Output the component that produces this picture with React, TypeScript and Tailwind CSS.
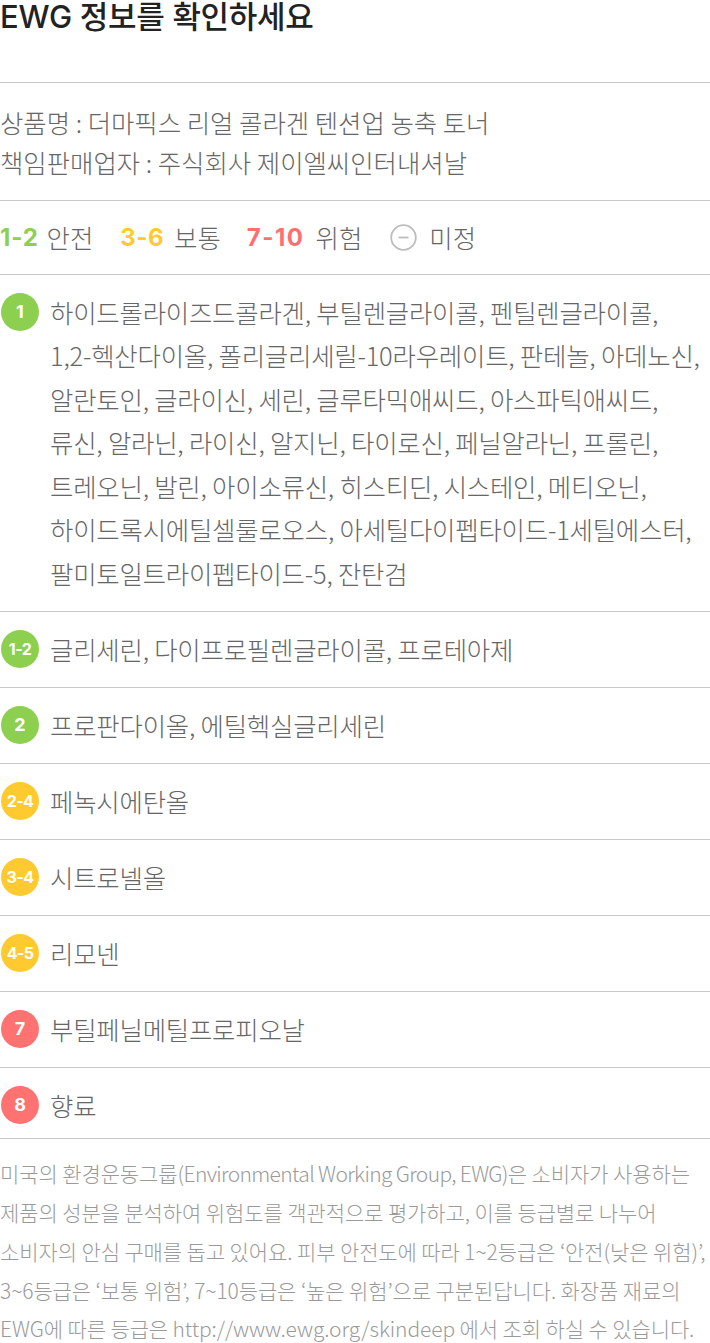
import React from 'react';

const kr = { fontFamily: '"Noto Sans CJK KR", "Noto Sans", sans-serif' };
const latin = { fontFamily: 'Inter, "Noto Sans CJK KR", sans-serif' };

type Row = { grade: string; color: string; lines: string[] };

const rows: Row[] = [
  {
    grade: '1',
    color: 'bg-[#8dcf4f]',
    lines: [
      '하이드롤라이즈드콜라겐, 부틸렌글라이콜, 펜틸렌글라이콜,',
      '1,2-헥산다이올, 폴리글리세릴-10라우레이트, 판테놀, 아데노신,',
      '알란토인, 글라이신, 세린, 글루타믹애씨드, 아스파틱애씨드,',
      '류신, 알라닌, 라이신, 알지닌, 타이로신, 페닐알라닌, 프롤린,',
      '트레오닌, 발린, 아이소류신, 히스티딘, 시스테인, 메티오닌,',
      '하이드록시에틸셀룰로오스, 아세틸다이펩타이드-1세틸에스터,',
      '팔미토일트라이펩타이드-5, 잔탄검',
    ],
  },
  { grade: '1-2', color: 'bg-[#8dcf4f]', lines: ['글리세린, 다이프로필렌글라이콜, 프로테아제'] },
  { grade: '2', color: 'bg-[#8dcf4f]', lines: ['프로판다이올, 에틸헥실글리세린'] },
  { grade: '2-4', color: 'bg-[#ffca30]', lines: ['페녹시에탄올'] },
  { grade: '3-4', color: 'bg-[#ffca30]', lines: ['시트로넬올'] },
  { grade: '4-5', color: 'bg-[#ffca30]', lines: ['리모넨'] },
  { grade: '7', color: 'bg-[#ff7272]', lines: ['부틸페닐메틸프로피오날'] },
  { grade: '8', color: 'bg-[#ff7272]', lines: ['향료'] },
];

function Badge({ grade, color }: { grade: string; color: string }) {
  const small = grade.length > 1;
  return (
    <div
      className={`flex h-[38px] w-[38px] shrink-0 items-center justify-center rounded-full text-white font-bold ${color} ${
        small ? 'text-[16px] tracking-[-0.6px]' : 'text-[18px]'
      }`}
      style={latin}
    >
      {grade}
    </div>
  );
}

function MinusCircle() {
  return (
    <svg width="27" height="27" viewBox="0 0 27 27" fill="none">
      <circle cx="13.5" cy="13.5" r="12.3" stroke="#bdbdbd" strokeWidth="1.8" />
      <line x1="8.5" y1="13.5" x2="18.5" y2="13.5" stroke="#bdbdbd" strokeWidth="1.8" />
    </svg>
  );
}

export default function App() {
  return (
    <div className="w-[710px] bg-white text-[#666]" style={kr}>
      {/* 타이틀 */}
      <div className="h-[83px] border-b border-[#c9c9c9]">
        <h1 className="text-[31px] font-medium leading-[34px] text-[#222] tracking-[-0.3px]" style={latin}>
          EWG 정보를 확인하세요
        </h1>
      </div>

      {/* 상품 정보 */}
      <div className="border-b border-[#c9c9c9] pt-[19px] pb-[18px] text-[25.4px] leading-[40px] font-light">
        <p>상품명 : 더마픽스 리얼 콜라겐 텐션업 농축 토너</p>
        <p>책임판매업자 : 주식회사 제이엘씨인터내셔날</p>
      </div>

      {/* 범례 */}
      <div className="flex items-center border-b border-[#c9c9c9] py-[16px] text-[25.4px] leading-[41px] font-light">
        <span className="text-[24px] font-bold text-[#8dcf4f] tracking-[0.8px]" style={latin}>1-2</span>
        <span className="ml-[8px]">안전</span>
        <span className="ml-[27px] text-[24px] font-bold text-[#ffca30] tracking-[0.5px]" style={latin}>3-6</span>
        <span className="ml-[10px]">보통</span>
        <span className="ml-[26px] text-[24px] font-bold text-[#ff6f6f] tracking-[1.5px]" style={latin}>7-10</span>
        <span className="ml-[11px]">위험</span>
        <span className="ml-[28px] flex items-center">
          <MinusCircle />
        </span>
        <span className="ml-[12px]">미정</span>
      </div>

      {/* 성분 목록 */}
      {rows.map((row, idx) => (
        <div
          key={row.grade}
          className={`flex items-start border-b border-[#c9c9c9] pt-[15.75px] ${
            idx === rows.length - 1 ? 'pb-[11px]' : 'pb-[15.75px]'
          }`}
        >
          <div className="mt-[2px] ml-[1px]">
            <Badge grade={row.grade} color={row.color} />
          </div>
          <div className="ml-[11px] whitespace-nowrap text-[25.4px] leading-[43.5px] font-light tracking-[-0.2px]">
            {row.lines.map((l, i) => (
              <div key={i}>{l}</div>
            ))}
          </div>
        </div>
      ))}

      {/* 안내문 */}
      <p className="whitespace-nowrap pt-[15px] pb-[6px] text-[21px] leading-[38.8px] font-light text-[#9a9a9a] tracking-[-0.1px]">
        미국의 환경운동그룹<span className="tracking-[-0.65px]">(Environmental Working Group, EWG)</span>은 소비자가 사용하는
        <br />
        제품의 성분을 분석하여 위험도를 객관적으로 평가하고, 이를 등급별로 나누어
        <br />
        소비자의 안심 구매를 돕고 있어요. 피부 안전도에 따라 1~2등급은 ‘안전(낮은 위험)’,
        <br />
        3~6등급은 ‘보통 위험’, 7~10등급은 ‘높은 위험’으로 구분된답니다. 화장품 재료의
        <br />
        EWG에 따른 등급은 http://www.ewg.org/skindeep 에서 조회 하실 수 있습니다.
      </p>
    </div>
  );
}
